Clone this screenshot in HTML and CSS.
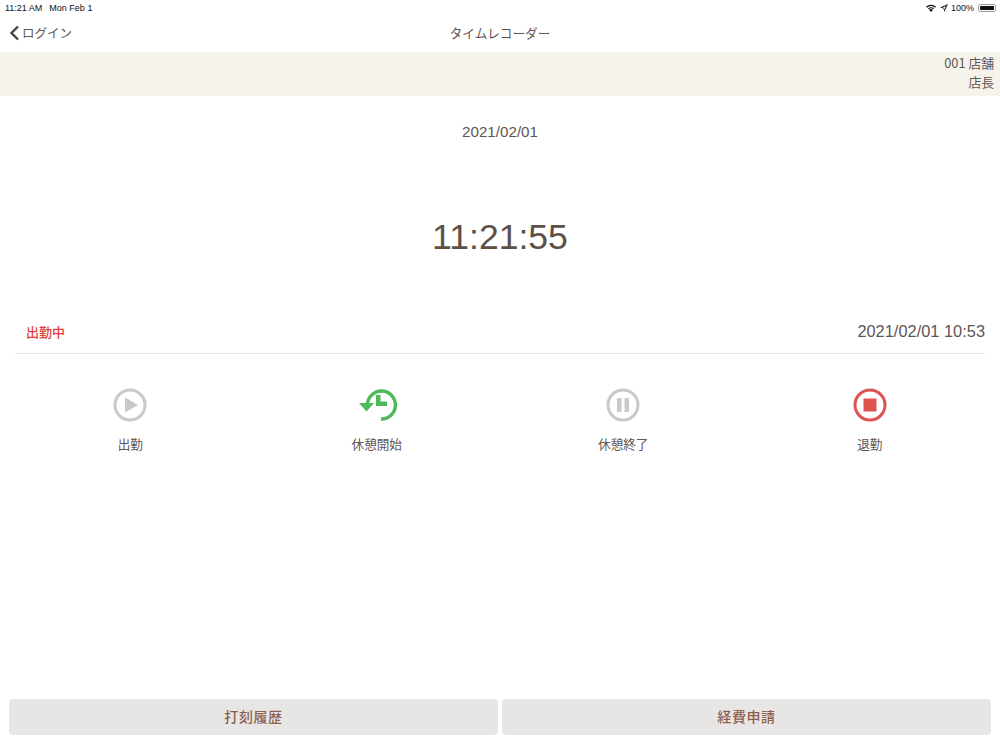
FILE: index.html
```html
<!DOCTYPE html>
<html lang="ja">
<head>
<meta charset="utf-8">
<title>タイムレコーダー</title>
<link rel="stylesheet" href="styles.css">
</head>
<body>
<div class="app">
  <div class="status">
    <div class="status-left"><span>11:21 AM</span><span>Mon Feb 1</span></div>
    <div class="status-right">
      <svg class="wifi" width="12" height="9" viewBox="0 0 12 9"><path d="M6 9 L4 6.8 A3 3 0 0 1 8 6.8 Z" fill="#111"/><path d="M2.9 5.6 A4.6 4.6 0 0 1 9.1 5.6 L8.4 6.3 A3.6 3.6 0 0 0 3.6 6.3 Z" fill="#111"/><path d="M1 3.7 A7.2 7.2 0 0 1 11 3.7 L10 4.7 A5.8 5.8 0 0 0 2 4.7 Z" fill="#111"/></svg>
      <svg class="loc" width="8" height="8" viewBox="0 0 8 8"><path d="M8 0 L0 3.6 L3.6 4.4 L4.4 8 Z M6 2 L4.2 5.4 L3.9 4.1 L2.6 3.8 Z" fill="#222" fill-rule="evenodd"/></svg>
      <span>100%</span>
      <span class="battery"><span class="battery-fill"></span></span>
    </div>
  </div>
  <header class="nav">
    <a class="back">
      <svg width="11" height="16" viewBox="0 0 11 16"><path d="M9 1.5 L2.5 8 L9 14.5" fill="none" stroke="#4a4340" stroke-width="2.4"/></svg>
      <span>ログイン</span>
    </a>
    <h1 class="title">タイムレコーダー</h1>
  </header>
  <div class="store"><div>001 店舗</div><div>店長</div></div>
  <main class="main">
    <div class="date">2021/02/01</div>
    <div class="clock">11:21:55</div>
    <div class="state">
      <span class="state-label">出勤中</span>
      <span class="state-time">2021/02/01 10:53</span>
    </div>
    <div class="actions">
      <div class="action">
        <svg width="34" height="34" viewBox="0 0 34 34"><circle cx="17" cy="17" r="15" fill="none" stroke="#c9c9c9" stroke-width="3"/><path d="M12 9.5 L25 17 L12 24.5 Z" fill="#c9c9c9"/></svg>
        <span>出勤</span>
      </div>
      <div class="action">
        <svg class="icon-rest" width="38" height="34" viewBox="0 0 38 34"><path d="M8.5 16 A14 14 0 1 1 22 31" fill="none" stroke="#4fb85a" stroke-width="3.4"/><path d="M0 15 H15 L7.5 23.5 Z" fill="#4fb85a"/><path d="M17 7 H21.5 V13.5 H28 V18 H17 Z" fill="#4fb85a"/></svg>
        <span>休憩開始</span>
      </div>
      <div class="action">
        <svg width="34" height="34" viewBox="0 0 34 34"><circle cx="17" cy="17" r="15" fill="none" stroke="#c9c9c9" stroke-width="3"/><rect x="11" y="10" width="4.5" height="14" fill="#c9c9c9"/><rect x="18.5" y="10" width="4.5" height="14" fill="#c9c9c9"/></svg>
        <span>休憩終了</span>
      </div>
      <div class="action">
        <svg width="34" height="34" viewBox="0 0 34 34"><circle cx="17" cy="17" r="15" fill="none" stroke="#dc5350" stroke-width="3"/><rect x="10.5" y="10.5" width="13" height="13" fill="#dc5350"/></svg>
        <span>退勤</span>
      </div>
    </div>
  </main>
  <footer class="footer">
    <button class="btn">打刻履歴</button>
    <button class="btn">経費申請</button>
  </footer>
</div>
</body>
</html>
```
FILE: styles.css
```css
* { box-sizing: border-box; }
html, body { margin: 0; padding: 0; height: 100%; background: #fff; }
body { font-family: "Noto Sans CJK JP", "Liberation Sans", sans-serif; color: #5f5552; }
.app { width: 1000px; height: 750px; display: flex; flex-direction: column; overflow: hidden; }
.status { height: 15px; padding: 0 4px 0 5px; display: flex; justify-content: space-between; align-items: center; font-family: "Liberation Sans", sans-serif; font-size: 9px; color: #111; }
.status-left { display: flex; gap: 7px; }
.status-right { display: flex; align-items: center; gap: 3px; }
.battery { width: 18px; height: 8px; margin-left: 1px; border: 1px solid #999; border-radius: 2.5px; padding: 1px; display: block; }
.battery-fill { display: block; height: 100%; background: #111; border-radius: 1px; }
.nav { height: 37px; display: flex; align-items: center; justify-content: center; position: relative; padding-bottom: 2px; }
.back { position: absolute; left: 9px; top: 10px; display: flex; align-items: center; gap: 2px; font-size: 12.5px; line-height: 16px; }
.title { margin: 0; font-size: 12.6px; font-weight: 400; color: #5f5552; }
.store { height: 44px; background: #f6f3ec; padding: 1px 6px 0 0; text-align: right; font-size: 12.8px; line-height: 19px; }
.main { flex: 1; padding: 0 15px; display: flex; flex-direction: column; }
.date { margin-top: 26px; height: 20px; line-height: 20px; text-align: center; font-family: "Liberation Sans", sans-serif; font-size: 15.2px; }
.clock { margin-top: 70px; height: 50px; line-height: 50px; text-align: center; font-family: "Liberation Sans", sans-serif; font-size: 35.6px; color: #5f5047; }
.state { margin-top: 49px; height: 43px; padding: 0 0 2px 11px; display: flex; justify-content: space-between; align-items: center; border-bottom: 1px solid #e8e8e8; }
.state-label { color: #e0403c; font-size: 13px; font-weight: 500; }
.state-time { font-family: "Liberation Sans", sans-serif; font-size: 16.4px; }
.actions { margin: 34px -15px 0; padding: 0 7px; display: grid; grid-template-columns: repeat(4, 246.5px); }
.action { display: flex; flex-direction: column; align-items: center; gap: 12px; font-size: 12.6px; line-height: 19px; }
.icon-rest { position: relative; left: 1px; }
.footer { height: 51px; padding: 0 9px 15px; display: flex; gap: 4px; }
.btn { flex: 1; border: 0; border-radius: 4px; background: #e8e6e4; color: #8c5f50; font-family: "Noto Sans CJK JP", sans-serif; font-size: 14px; font-weight: 500; letter-spacing: 0.6px; padding: 0 0 2px; }
```
